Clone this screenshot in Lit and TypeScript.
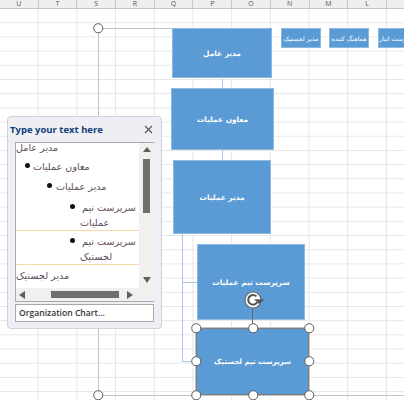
import { LitElement, html, css, svg } from "lit";
import { customElement } from "lit/decorators.js";

const COLS = ["U", "T", "S", "R", "Q", "P", "O", "N", "M", "L", ""];
const BOXES = [
  { cls: "big", x: 172, y: 28, w: 100, h: 50, t: "مدیر عامل" },
  { cls: "big", x: 171, y: 88, w: 103, h: 62, t: "معاون عملیات" },
  { cls: "big", x: 173, y: 160, w: 98, h: 74, t: "مدیر عملیات" },
  { cls: "big", x: 197, y: 244, w: 108, h: 76, t: "سرپرست تیم عملیات" },
  { cls: "small", x: 281, y: 28, w: 40, h: 20, t: "مدیر لجستیک" },
  { cls: "small", x: 329, y: 28, w: 40, h: 20, t: "هماهنگ کننده" },
  { cls: "small", x: 378, y: 28, w: 40, h: 20, t: "سرپرست انبار" },
];
const HANDLES = [
  [196, 328], [253, 328], [309, 328], [196, 361], [309, 361],
  [196, 395], [253, 395], [309, 395],
];
const ROWS = [
  { ind: 0, lines: ["مدیر عامل"], cls: "r-top" },
  { ind: 1, lines: ["معاون عملیات"], cls: "r-1" },
  { ind: 2, lines: ["مدیر عملیات"], cls: "r-2" },
  { ind: 3, lines: ["سرپرست تیم", "عملیات"], cls: "r-3" },
  { ind: 3, lines: ["سرپرست تیم", "لجستیک"], cls: "r-4" },
  { ind: 0, lines: ["مدیر لجستیک"], cls: "r-5" },
];

@customElement("app-root")
export class AppRoot extends LitElement {
  static styles = css`
    :host { display: block; position: relative; width: 404px; height: 400px; overflow: hidden; background: #fff; font-family: "Open Sans", sans-serif; }
    .head { display: flex; height: 8px; background: #efefef; border-bottom: 1px solid #c6c6c6; }
    .col { flex: 0 0 38.7px; box-sizing: border-box; border-right: 1px solid #c9c9c9; font: 7px/8px "Open Sans", sans-serif; color: #555; text-align: center; }
    .sheet { height: 391px; background-color: #fff;
      background-image: linear-gradient(to right, transparent 37.7px, #e6e6e6 37.7px, #e6e6e6 38.7px), linear-gradient(to bottom, transparent 13.2px, #e6e6e6 13.2px, #e6e6e6 14.2px);
      background-size: 38.7px 14.2px; }
    .frame { position: absolute; background: #c4c4c4; }
    .box { position: absolute; box-sizing: border-box; background: #5b9bd5; border: 1px solid #8db8e0; display: flex; align-items: center; justify-content: center; color: #fff; font-family: "DejaVu Sans", sans-serif; font-weight: 700; white-space: nowrap; }
    .big { font-size: 7.4px; }
    .small { font-size: 6.3px; font-weight: 400; }
    .selected { border: 1px solid #7d7d7d; outline: 1px solid #c4c4c4; font-size: 7.1px; }
    .conn { position: absolute; background: #a9c6e6; }
    .handle { position: absolute; width: 9.5px; height: 9.5px; box-sizing: border-box; border: 1.5px solid #5a5a5a; border-radius: 50%; background: #fff; transform: translate(-50%, -50%); }
    .rot { position: absolute; left: 244px; top: 291px; }
    .stem { position: absolute; left: 252px; top: 308px; width: 1px; height: 20px; background: #666; }
    .pane { position: absolute; left: 7px; top: 116px; width: 155px; height: 213px; box-sizing: border-box; background: #eeeef4; border: 1px solid #d2d2d8; border-radius: 4px; display: flex; flex-direction: column; padding: 0 7px 6px 7px; }
    .title { height: 25px; display: flex; align-items: center; justify-content: space-between; padding: 0 1px 0 0; margin-left: -5px; flex: none; }
    .title span { font-size: 9.5px; font-weight: 700; color: #0f3f78; white-space: nowrap; }
    .tree { flex: none; height: 160px; box-sizing: border-box; background: #fff; border: 1px solid #a9a9a9; display: grid; grid-template-columns: 123px 15px; grid-template-rows: 145px 13px; }
    .list { overflow: hidden; font-family: "DejaVu Sans", sans-serif; font-size: 9.6px; color: #5d4b58; }
    .row { box-sizing: border-box; display: flex; align-items: flex-start; }
    .r-top { height: 13px; margin-top: -2px; }
    .r-1 { height: 20px; padding-top: 6px; }
    .r-2 { height: 20px; padding-top: 6px; }
    .r-3 { height: 37px; padding-top: 7px; border-bottom: 1px solid #fbd9a6; }
    .r-4 { height: 34px; padding-top: 4px; border-bottom: 1px solid #fbd9a6; }
    .r-5 { height: 22px; padding-top: 4px; }
    .ind-1 { padding-left: 9px; } .ind-2 { padding-left: 31px; } .ind-3 { padding-left: 54px; }
    .dot { flex: none; width: 5px; height: 5px; margin-top: 3px; margin-right: 4px; border-radius: 50%; background: #111; }
    .ind-1 .dot { margin-right: 3px; }
    .ind-3 .dot { margin-right: 5px; }
    .txt { direction: rtl; text-align: left; line-height: 14.5px; white-space: nowrap; }
    .ind-3 .txt div:first-child { margin-left: 2px; }
    .vbar, .hbar, .corner { background: #f0f0f0; }
    .vbar { display: flex; flex-direction: column; align-items: center; justify-content: space-between; padding: 4px 0 5px; box-sizing: border-box; }
    .vthumb { width: 7px; height: 54px; background: #6f6f6f; margin-top: 7px; margin-bottom: auto; }
    .hbar { display: flex; align-items: center; padding: 0 6px 0 3px; }
    .hthumb { width: 68px; height: 7px; background: #6f6f6f; margin: 0 auto 0 26px; }
    .up { border: 4px solid transparent; border-top: 0; border-bottom: 5px solid #606060; width: 0; }
    .down { border: 4px solid transparent; border-bottom: 0; border-top: 6px solid #606060; width: 0; }
    .left { border: 4px solid transparent; border-left: 0; border-right: 6px solid #606060; width: 0; }
    .right { border: 4px solid transparent; border-right: 0; border-left: 6px solid #606060; width: 0; }
    .link { flex: none; margin-top: 2px; height: 18px; box-sizing: border-box; background: #fff; border: 1px solid #a9a9a9; padding: 0 3px; font-size: 8.6px; line-height: 16px; font-weight: 600; color: #333; white-space: nowrap; }
  `;

  render() {
    return html`
      <div class="head">${COLS.map((c) => html`<div class="col">${c}</div>`)}</div>
      <div class="sheet"></div>

      <div class="frame" style="left:98px;top:27.5px;width:76px;height:1.5px"></div>
      <div class="frame" style="left:97.5px;top:28px;width:1.5px;height:88px"></div>
      <div class="frame" style="left:97.5px;top:329px;width:1.5px;height:66px"></div>
      <div class="frame" style="left:98px;top:394.5px;width:306px;height:1.5px"></div>

      <div class="conn" style="left:222px;top:79px;width:1px;height:9px"></div>
      <div class="conn" style="left:222px;top:150px;width:1px;height:10px"></div>
      <div class="conn" style="left:182px;top:234px;width:1px;height:127px"></div>
      <div class="conn" style="left:182px;top:281.5px;width:15px;height:1.5px"></div>
      <div class="conn" style="left:182px;top:361px;width:14px;height:1px"></div>

      ${BOXES.map(
        (b) => html`<div class="box ${b.cls}" dir="rtl" style="left:${b.x}px;top:${b.y}px;width:${b.w}px;height:${b.h}px">${b.t}</div>`
      )}
      <div class="box selected" dir="rtl" style="left:196px;top:328px;width:113px;height:67px">سرپرست تیم لجستیک</div>

      <div class="stem"></div>
      <svg class="rot" width="22" height="18" viewBox="0 0 22 18">
        <circle cx="9" cy="9" r="8" fill="#fff" stroke="#6a6a6a" stroke-width="1.2"></circle>
        ${svg`<path d="M13.2 11.2A4.8 4.8 0 1 1 12.4 5.4" fill="none" stroke="#555" stroke-width="2"></path>
        <path d="M10.2 8.2L20.5 8.4L15 13Z" fill="#555"></path>`}
      </svg>
      ${HANDLES.map(([x, y]) => html`<div class="handle" style="left:${x}px;top:${y}px"></div>`)}
      <div class="handle" style="left:98px;top:28px"></div>
      <div class="handle" style="left:98px;top:395px"></div>

      <div class="pane">
        <div class="title">
          <span>Type your text here</span>
          <svg width="9" height="9" viewBox="0 0 9 9">
            ${svg`<path d="M1 1L8 8M8 1L1 8" stroke="#555" stroke-width="1.1" fill="none"></path>`}
          </svg>
        </div>
        <div class="tree">
          <div class="list">
            ${ROWS.map(
              (r) => html`<div class="row ${r.cls} ind-${r.ind}">
                ${r.ind ? html`<div class="dot"></div>` : ""}
                <div class="txt">${r.lines.map((l) => html`<div>${l}</div>`)}</div>
              </div>`
            )}
          </div>
          <div class="vbar"><div class="up"></div><div class="vthumb"></div><div class="down"></div></div>
          <div class="hbar"><div class="left"></div><div class="hthumb"></div><div class="right"></div></div>
          <div class="corner"></div>
        </div>
        <div class="link">Organization Chart...</div>
      </div>
    `;
  }
}
